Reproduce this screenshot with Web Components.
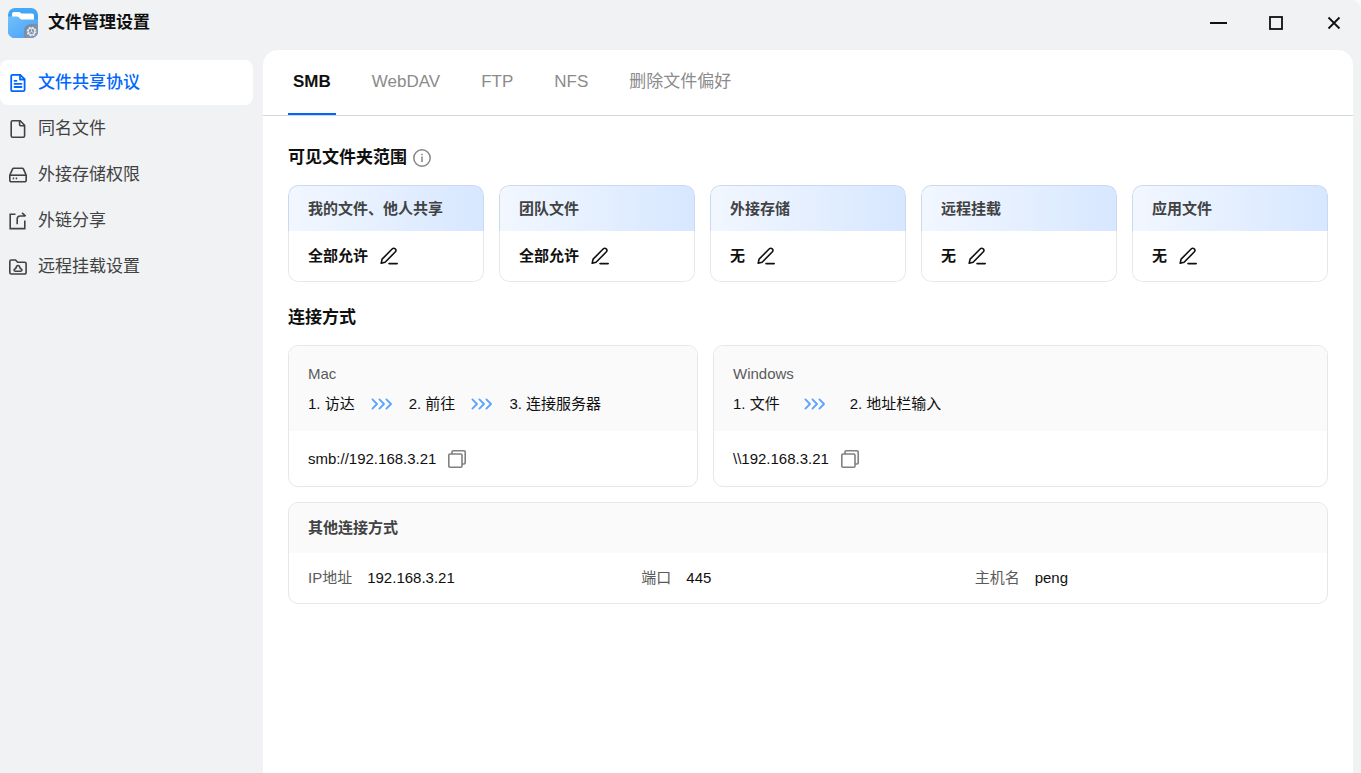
<!DOCTYPE html>
<html lang="zh-CN">
<head>
<meta charset="UTF-8">
<meta name="viewport" content="width=device-width, initial-scale=1">
<title>文件管理设置</title>
<style>
    html, body {
        margin: 0;
        height: 100%;
        background: #fbf9f6;
    }
    body {
        font-family: "Liberation Sans", "Noto Sans CJK SC", sans-serif;
        font-size: 15px;
        line-height: 20px;
        color: #101010;
        --blue: #0066ff;
        --line: #e6e7e8;
    }
</style>
</head>
<body>
<settings-window>
    <title-bar slot="header">文件管理设置</title-bar>

    <nav-item slot="nav" icon="doc" active>文件共享协议</nav-item>
    <nav-item slot="nav" icon="file">同名文件</nav-item>
    <nav-item slot="nav" icon="disk">外接存储权限</nav-item>
    <nav-item slot="nav" icon="share">外链分享</nav-item>
    <nav-item slot="nav" icon="remote">远程挂载设置</nav-item>

    <tab-bar>
        <tab-item active>SMB</tab-item>
        <tab-item>WebDAV</tab-item>
        <tab-item>FTP</tab-item>
        <tab-item>NFS</tab-item>
        <tab-item>删除文件偏好</tab-item>
    </tab-bar>

    <settings-section heading="可见文件夹范围" info>
        <card-grid columns="1fr 1fr 1fr 1fr 1fr">
            <scope-card heading="我的文件、他人共享">全部允许</scope-card>
            <scope-card heading="团队文件">全部允许</scope-card>
            <scope-card heading="外接存储">无</scope-card>
            <scope-card heading="远程挂载">无</scope-card>
            <scope-card heading="应用文件">无</scope-card>
        </card-grid>
    </settings-section>

    <settings-section heading="连接方式">
        <card-grid columns="2fr 3fr">
            <connect-card heading="Mac" steps="1. 访达|2. 前往|3. 连接服务器">smb://192.168.3.21</connect-card>
            <connect-card heading="Windows" steps="1. 文件|2. 地址栏输入" wide>\\192.168.3.21</connect-card>
        </card-grid>
        <detail-card heading="其他连接方式">
            <detail-field label="IP地址">192.168.3.21</detail-field>
            <detail-field label="端口">445</detail-field>
            <detail-field label="主机名">peng</detail-field>
        </detail-card>
    </settings-section>
</settings-window>

<script>
const icons = {
    doc: `<svg width="20" height="20" viewBox="0 0 20 20" fill="none" stroke="currentColor" stroke-width="1.8" stroke-linejoin="round" stroke-linecap="round">
        <path d="M4.6 1.8h7.6l4.4 4.4v10.6a1.4 1.4 0 0 1-1.4 1.4H4.6a1.4 1.4 0 0 1-1.4-1.4V3.2a1.4 1.4 0 0 1 1.4-1.4z"/><path d="M12 2v4.5h4.4M6.5 7.8h2M6.5 10.8h7M6.5 14h7"/></svg>`,
    file: `<svg width="20" height="20" viewBox="0 0 20 20" fill="none" stroke="currentColor" stroke-width="1.6" stroke-linejoin="round">
        <path d="M4.6 1.8h7.6l4.4 4.4v10.6a1.4 1.4 0 0 1-1.4 1.4H4.6a1.4 1.4 0 0 1-1.4-1.4V3.2a1.4 1.4 0 0 1 1.4-1.4z"/><path d="M11.6 2v3.8a1 1 0 0 0 1 1h3.8"/></svg>`,
    disk: `<svg width="20" height="20" viewBox="0 0 20 20" fill="none" stroke="currentColor" stroke-width="1.6" stroke-linejoin="round">
        <path d="M1.8 10.2 4.5 4.1a1.5 1.5 0 0 1 1.4-.9h8.2a1.5 1.5 0 0 1 1.4.9l2.7 6.1v5a1.6 1.6 0 0 1-1.6 1.6H3.4a1.6 1.6 0 0 1-1.6-1.6z"/><path d="M1.8 10.2h16.4"/><path d="M4.7 13.4h1.5M7.7 13.4h1.5"/></svg>`,
    share: `<svg width="20" height="20" viewBox="0 0 20 20" fill="none" stroke="currentColor" stroke-width="1.6">
        <path d="M7.5 3.2H2.200v14.400h14.600v-8"/><path d="M9.200 13.300V8a3 3 0 0 1 3-3h5.200M14 1.800l3.700 3.300"/></svg>`,
    remote: `<svg width="20" height="20" viewBox="0 0 20 20" fill="none" stroke="currentColor" stroke-width="1.6" stroke-linejoin="round">
        <path d="M3.3 3h4.3l2 2.200h7a1.500 1.500 0 0 1 1.500 1.500v8.800a1.500 1.500 0 0 1-1.500 1.500H3.300a1.500 1.500 0 0 1-1.500-1.500v-11A1.500 1.500 0 0 1 3.300 3z"/><path d="M7.200 14.200a1.100 1.100 0 0 1-.8-1.900l1.300-1 .9-2a1.600 1.600 0 0 1 2.800 0l.9 2 1.300 1a1.100 1.100 0 0 1-.8 1.900z"/></svg>`,
    edit: `<svg width="18" height="18" viewBox="0 0 18 18" fill="none" stroke="currentColor" stroke-width="1.6" stroke-linejoin="round" stroke-linecap="round">
        <path d="M1.200 16.200l.9-4.100L12.400 1.800a1.900 1.900 0 0 1 2.700 0l.3.3a1.900 1.900 0 0 1 0 2.700L5.100 15.200z"/><path d="M9 16.600h8.200"/></svg>`,
    copy: `<svg width="18" height="18" viewBox="0 0 18 18" fill="none" stroke="currentColor" stroke-width="1.6" stroke-linejoin="round">
        <rect x=".8" y="4" width="13.2" height="13.2" rx="1.2"/><path d="M4 4V2a1.2 1.2 0 0 1 1.2-1.2H16A1.2 1.2 0 0 1 17.200 2v10.800A1.200 1.200 0 0 1 16 14h-2"/></svg>`,
    info: `<svg width="18" height="18" viewBox="0 0 18 18" fill="none" stroke="currentColor" stroke-width="1.5">
        <circle cx="9" cy="9" r="8.2"/><path d="M9 7.6v5.4M9 4.8v1.5" stroke-width="1.5"/></svg>`,
    arrows: `<svg width="22" height="12" viewBox="0 0 22 12" fill="none" stroke="#5aa2ff" stroke-width="1.8" stroke-linecap="round" stroke-linejoin="round">
        <path d="M1.4 1.4 6 6l-4.6 4.6M8.4 1.4 13 6l-4.6 4.6M15.4 1.4 20 6l-4.6 4.6"/></svg>`,
    minimize: `<svg width="18" height="18" viewBox="0 0 18 18" stroke="currentColor" stroke-width="2"><path d="M1 9h17"/></svg>`,
    maximize: `<svg width="18" height="18" viewBox="0 0 18 18" fill="none" stroke="currentColor" stroke-width="1.8"><rect x="3" y="3" width="12" height="12"/></svg>`,
    close: `<svg width="18" height="18" viewBox="0 0 18 18" stroke="currentColor" stroke-width="1.8"><path d="M3.5 3.5l11 11M14.5 3.5l-11 11"/></svg>`,
    logo: `<svg width="30" height="30" viewBox="0 0 30 30">
        <defs>
            <linearGradient id="back" x1="0" y1="0" x2="0" y2="1"><stop offset="0" stop-color="#45aaf6"/><stop offset="1" stop-color="#2a8ef0"/></linearGradient>
            <linearGradient id="front" x1="0" y1="0" x2="1" y2="1"><stop offset="0" stop-color="#6fc0fb"/><stop offset="1" stop-color="#4a9ff5"/></linearGradient>
            <linearGradient id="badge" x1="0" y1="0" x2="1" y2="1"><stop offset="0" stop-color="#6d86a5"/><stop offset="1" stop-color="#8f9dad"/></linearGradient>
            <clipPath id="round"><rect width="30" height="30" rx="7"/></clipPath>
        </defs>
        <g clip-path="url(#round)">
            <path fill="url(#back)" d="M0 0h30v30H0z"/>
            <path fill="#fff" d="M4 6A2 2 0 0 1 6 4h5.500l2 1.500H24a2 2 0 0 1 2 2V14H4z"/>
            <path fill="url(#front)" d="M0 8.500h8.500c1.500 0 2.200.5 3 1.500s1.500 1.500 3 1.500H30V30H0z"/>
            <path fill="url(#badge)" d="M16 30v-7a7 7 0 0 1 7-7h7v14z"/>
        </g>
        <circle cx="23.500" cy="23.500" r="3.300" fill="none" stroke="#e6ebf1" stroke-width="1.200"/>
        <circle cx="23.500" cy="23.500" r="4.300" fill="none" stroke="#e6ebf1" stroke-width="1.200" stroke-dasharray="1.700 1.677"/>
        <path d="M23.500 23.500v-2.500M23.500 23.500l2.200 1.300M23.500 23.500l-2.200 1.300" stroke="#e6ebf1" stroke-width=".8"/>
    </svg>`
};

// shared by all the elements: fills the shadow root
class BaseElement extends HTMLElement {
    constructor() {
        super();
        this.attachShadow({ mode: 'open' });
    }

    connectedCallback() {
        this.shadowRoot.innerHTML = `<style>
            * { box-sizing: border-box; }
            svg { display: block; flex: none; }
            button {
                border: 0;
                padding: 0;
                background: none;
                font: inherit;
                color: inherit;
                cursor: pointer;
            }
            h1, h2, h3, p { margin: 0; font: inherit; }
        </style>` + this.render();
    }
}

class SettingsWindow extends BaseElement {
    render() {
        return `<style>
            :host {
                display: flex;
                flex-direction: column;
                min-height: 100vh;
                background: #f1f2f4;
                border-top-right-radius: 10px;
            }
            .body {
                flex: 1;
                display: flex;
                gap: 10px;
                padding-right: 8px;
            }
            nav {
                flex: none;
                width: 253px;
                padding-top: 10px;
                display: flex;
                flex-direction: column;
                gap: 1px;
            }
            main {
                flex: 1;
                min-width: 0;
                background: white;
                border-radius: 15px 15px 0 0;
            }
        </style>
        <slot name="header"></slot>
        <div class="body">
            <nav><slot name="nav"></slot></nav>
            <main><slot></slot></main>
        </div>`;
    }
}

class TitleBar extends BaseElement {
    render() {
        return `<style>
            :host {
                display: flex;
                align-items: center;
                gap: 10px;
                height: 50px;
                box-sizing: border-box;
                padding: 0 12px 4px 8px;
            }
            h1 {
                flex: 1;
                font-size: 17px;
                font-weight: bold;
                line-height: 24px;
            }
            .controls { display: flex; gap: 28px; }
            .controls button {
                width: 30px;
                height: 30px;
                display: grid;
                place-items: center;
            }
        </style>
        ${icons.logo}
        <h1><slot></slot></h1>
        <div class="controls">
            <button aria-label="最小化">${icons.minimize}</button>
            <button aria-label="最大化">${icons.maximize}</button>
            <button aria-label="关闭">${icons.close}</button>
        </div>`;
    }
}

class NavItem extends BaseElement {
    render() {
        return `<style>
            :host { display: block; color: #414243; }
            :host([active]) { color: var(--blue); }
            a {
                display: flex;
                align-items: center;
                gap: 10px;
                height: 45px;
                padding-left: 8px;
                border-radius: 8px;
                color: inherit;
                text-decoration: none;
                font-size: 17px;
                line-height: 24px;
            }
            :host([active]) a { background: white; font-weight: 500; }
        </style>
        <a href="#">${icons[this.getAttribute('icon')]}<span><slot></slot></span></a>`;
    }
}

class TabBar extends BaseElement {
    render() {
        return `<style>
            :host {
                display: flex;
                gap: 31px;
                padding: 0 25px;
                border-bottom: 1px solid #d5d6d8;
            }
        </style>
        <slot></slot>`;
    }
}

class TabItem extends BaseElement {
    render() {
        return `<style>
            :host { display: block; color: #8b8b8b; }
            :host([active]) { color: #101010; font-weight: bold; }
            button {
                height: 65px;
                padding: 1px 5px 0;
                border-bottom: 2px solid transparent;
                font-size: 17px;
            }
            :host([active]) button { border-color: var(--blue); }
        </style>
        <button><slot></slot></button>`;
    }
}

class SettingsSection extends BaseElement {
    render() {
        return `<style>
            :host {
                display: flex;
                flex-direction: column;
                padding: 24px 25px 0;
            }
            :host([info]) { padding-top: 30px; }
            header {
                display: flex;
                align-items: center;
                gap: 6px;
                margin-bottom: 15px;
            }
            h2 { font-size: 17px; font-weight: bold; line-height: 24px; }
            button { color: #868686; }
        </style>
        <header>
            <h2>${this.getAttribute('heading')}</h2>
            ${this.hasAttribute('info') ? `<button aria-label="说明">${icons.info}</button>` : ''}
        </header>
        <slot></slot>`;
    }
}

class CardGrid extends BaseElement {
    render() {
        return `<style>
            :host {
                display: grid;
                grid-template-columns: ${this.getAttribute('columns')};
                gap: 15px;
            }
        </style>
        <slot></slot>`;
    }
}

const cardStyle = `
    :host {
        display: block;
        border: 1px solid var(--line);
        border-radius: 10px;
        overflow: hidden;
    }
    .head { background: #fafafa; padding: 0 19px; }
    .row {
        display: flex;
        align-items: center;
        padding: 0 19px;
    }`;

class ScopeCard extends BaseElement {
    render() {
        return `<style>${cardStyle}
            :host { position: relative; border: 0; }
            .head {
                background: linear-gradient(90deg, #f2f7ff, #d7e7ff);
                color: #414243;
                font-weight: bold;
                line-height: 45px;
                padding: 0 19px;
                border: 1px solid #c9daf0;
                border-bottom: 0;
                border-radius: 10px 10px 0 0;
            }
            .row {
                height: 51px;
                gap: 12px;
                font-weight: bold;
                border: 1px solid var(--line);
                border-top: 0;
                border-radius: 0 0 10px 10px;
            }
        </style>
        <h3 class="head">${this.getAttribute('heading')}</h3>
        <div class="row">
            <slot></slot>
            <button aria-label="编辑">${icons.edit}</button>
        </div>`;
    }
}

class ConnectCard extends BaseElement {
    render() {
        const steps = this.getAttribute('steps').split('|')
            .map(step => `<span>${step}</span>`)
            .join(icons.arrows);

        return `<style>${cardStyle}
            .head { padding: 18px 19px 17px; }
            h3 { color: #5a5a5a; }
            .steps {
                display: flex;
                align-items: center;
                gap: 16px;
                margin-top: 10px;
            }
            :host([wide]) .steps { gap: 24px; }
            .row { height: 55px; gap: 12px; }
            button { color: #808080; }
        </style>
        <div class="head">
            <h3>${this.getAttribute('heading')}</h3>
            <div class="steps">${steps}</div>
        </div>
        <div class="row">
            <slot></slot>
            <button aria-label="复制">${icons.copy}</button>
        </div>`;
    }
}

class DetailCard extends BaseElement {
    render() {
        return `<style>${cardStyle}
            :host { margin-top: 15px; }
            .head { color: #414243; font-weight: bold; line-height: 50px; }
            .row { height: 50px; }
        </style>
        <h3 class="head">${this.getAttribute('heading')}</h3>
        <div class="row"><slot></slot></div>`;
    }
}

class DetailField extends BaseElement {
    render() {
        return `<style>
            :host { flex: 1; display: flex; gap: 15px; }
            .label { color: #5a5a5a; }
        </style>
        <span class="label">${this.getAttribute('label')}</span>
        <span><slot></slot></span>`;
    }
}

customElements.define('settings-window', SettingsWindow);
customElements.define('title-bar', TitleBar);
customElements.define('nav-item', NavItem);
customElements.define('tab-bar', TabBar);
customElements.define('tab-item', TabItem);
customElements.define('settings-section', SettingsSection);
customElements.define('card-grid', CardGrid);
customElements.define('scope-card', ScopeCard);
customElements.define('connect-card', ConnectCard);
customElements.define('detail-card', DetailCard);
customElements.define('detail-field', DetailField);
</script>
</body>
</html>
